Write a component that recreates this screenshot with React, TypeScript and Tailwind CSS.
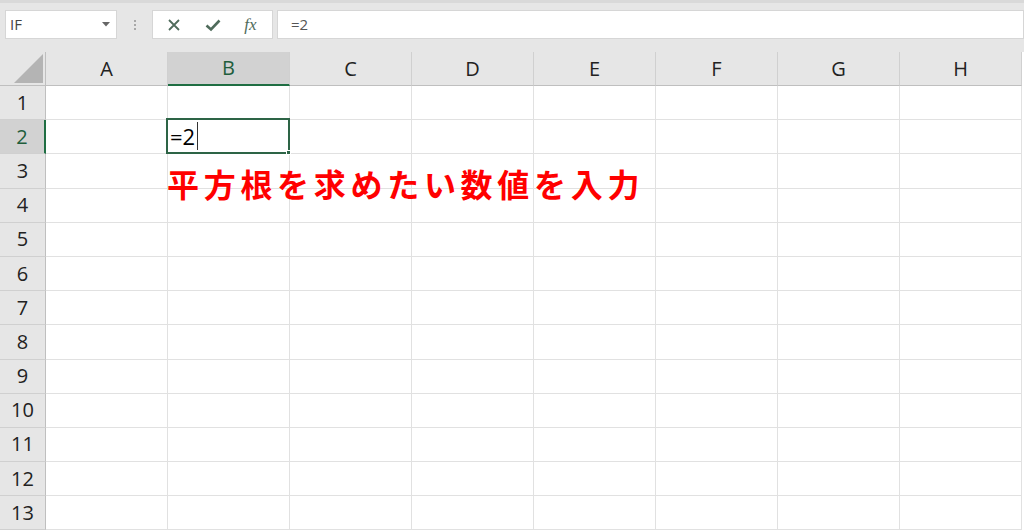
import React from "react";

const cols = ["A", "B", "C", "D", "E", "F", "G", "H"];
const rows = Array.from({ length: 13 }, (_, i) => i + 1);

function XIcon() {
  return (
    <svg width="14" height="14" viewBox="0 0 14 14">
      <path d="M2 2 L12 12 M12 2 L2 12" stroke="#4f6b5b" strokeWidth="1.8" fill="none" />
    </svg>
  );
}

function CheckIcon() {
  return (
    <svg width="16" height="14" viewBox="0 0 16 14">
      <path d="M1.5 7.5 L6 11.5 L14.5 2.5" stroke="#4f6b5b" strokeWidth="2.6" fill="none" />
    </svg>
  );
}

export default function App() {
  return (
    <div
      className="w-[1024px] h-[530px] overflow-hidden bg-[#e6e6e6] relative"
      style={{ fontFamily: '"Open Sans", "Liberation Sans", sans-serif' }}
    >
      {/* formula bar */}
      <div className="h-[52px] border-t-[3px] border-[#d9d9d9] flex items-start pt-[7px] pl-[5px]">
        <div className="w-[112px] h-[29px] bg-white border border-[#d6d6d6] flex items-center justify-between pl-[4px] pr-[6px]">
          <span className="text-[15px] text-[#444]">IF</span>
          <svg width="8" height="5" viewBox="0 0 8 5">
            <path d="M0 0 L8 0 L4 4.5 Z" fill="#666" />
          </svg>
        </div>
        <div className="w-[35px] h-[29px] flex flex-col items-center justify-center gap-[2px]">
          <span className="w-[2px] h-[2px] bg-[#a8a8a8]" />
          <span className="w-[2px] h-[2px] bg-[#a8a8a8]" />
          <span className="w-[2px] h-[2px] bg-[#a8a8a8]" />
        </div>
        <div className="w-[121px] h-[29px] bg-white border border-[#d6d6d6] flex items-center">
          <div className="w-[40px] flex justify-center ml-[1px]">
            <XIcon />
          </div>
          <div className="w-[38px] flex justify-center">
            <CheckIcon />
          </div>
          <div
            className="flex-1 flex justify-center text-[17px] italic text-[#4f6b5b] pr-[3px]"
            style={{ fontFamily: '"Liberation Serif", serif' }}
          >
            fx
          </div>
        </div>
        <div className="flex-1 h-[29px] ml-[4px] bg-white border border-[#d6d6d6] flex items-center pl-[13px]">
          <span className="text-[15px] text-[#555]">=2</span>
        </div>
      </div>

      {/* grid */}
      <div className="grid grid-cols-[46px_repeat(8,122px)] grid-rows-[34px] auto-rows-[34.2px] bg-white">
        {/* header row */}
        <div className="relative bg-[#e6e6e6] border-r border-b border-[#bfbfbf]">
          <svg className="absolute right-[2px] bottom-[2px]" width="29" height="29" viewBox="0 0 29 29">
            <path d="M29 0 L29 29 L0 29 Z" fill="#b4b4b4" />
          </svg>
        </div>
        {cols.map((c) =>
          c === "B" ? (
            <div
              key={c}
              className="bg-[#d2d2d2] border-r border-[#d0d0d0] border-b-2 border-b-[#1f6e43] flex items-center justify-center text-[20px] text-[#1f5e3c]"
            >
              {c}
            </div>
          ) : (
            <div
              key={c}
              className="bg-[#e6e6e6] border-r border-[#d0d0d0] border-b border-b-[#bfbfbf] flex items-center justify-center text-[20px] text-[#222]"
            >
              {c}
            </div>
          )
        )}

        {rows.map((r) => (
          <React.Fragment key={r}>
            {r === 2 ? (
              <div className="bg-[#d2d2d2] border-r-2 border-r-[#1f6e43] border-b border-[#d0d0d0] flex items-center justify-center text-[20px] text-[#1f5e3c]">
                {r}
              </div>
            ) : (
              <div className="bg-[#e6e6e6] border-r border-r-[#bfbfbf] border-b border-[#d0d0d0] flex items-center justify-center text-[20px] text-[#222]">
                {r}
              </div>
            )}
            {cols.map((c) => (
              <div key={c} className="relative border-r border-b border-[#e1e1e1]">
                {r === 2 && c === "B" && (
                  <div className="absolute -left-[2px] -top-[2px] w-[124px] h-[36px] border-2 border-[#2d6446] flex items-center pl-[2px] z-10">
                    <span className="text-[22px] text-black leading-none">=2</span>
                    <span className="w-[1px] h-[28px] bg-[#333] ml-[2px]" />
                    <span className="absolute -right-[3px] -bottom-[3px] w-[5px] h-[5px] bg-[#2d6446] border border-white" />
                  </div>
                )}
              </div>
            ))}
          </React.Fragment>
        ))}
      </div>

      {/* annotation */}
      <div
        className="absolute left-[167px] top-[167px] text-[32px] font-bold tracking-[4.7px] text-[#ff0000] leading-none whitespace-nowrap"
        style={{ fontFamily: '"Noto Sans CJK JP", sans-serif' }}
      >
        平方根を求めたい数値を入力
      </div>
    </div>
  );
}
